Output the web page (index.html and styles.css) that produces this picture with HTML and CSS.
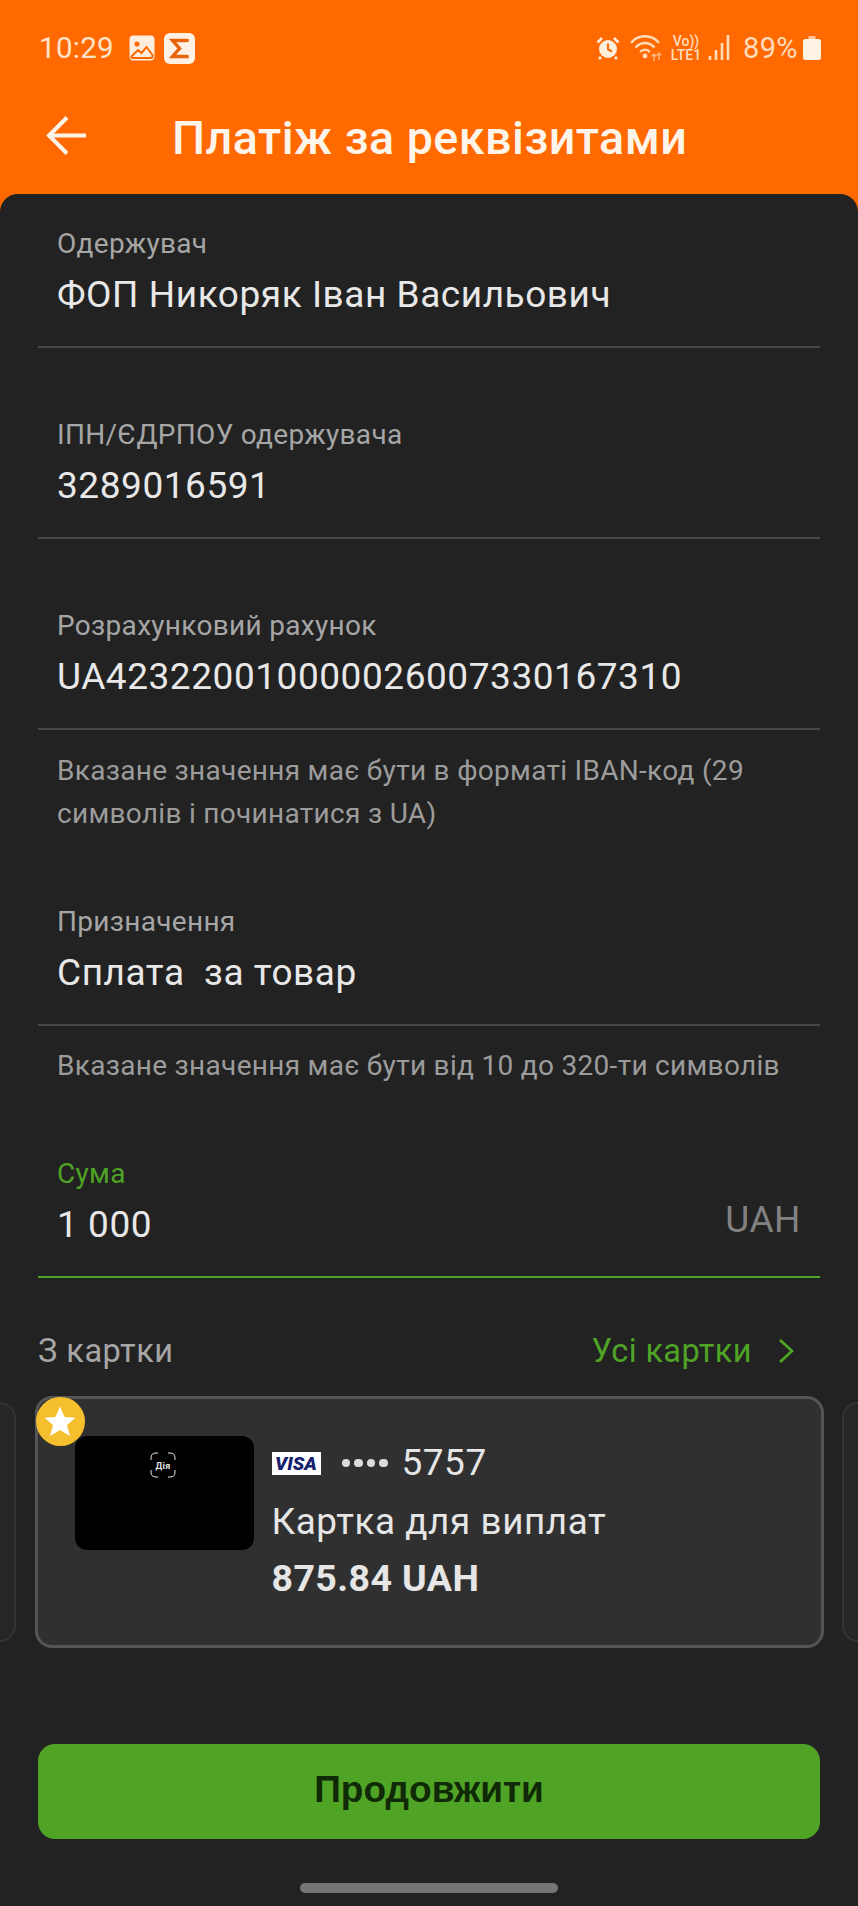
FILE: index.html
```html
<!DOCTYPE html>
<html lang="uk">
<head>
<meta charset="utf-8">
<title>Платіж за реквізитами</title>
<link rel="stylesheet" href="styles.css">
</head>
<body>
<div class="screen">
  <header class="top">
    <div class="status">
      <div class="status-left">
        <span class="time">10:29</span>
        <svg class="ic-gallery" width="26" height="26" viewBox="0 0 26 26"><rect x="0.5" y="0.5" width="25" height="25" rx="4" fill="#ffeede"/><circle cx="8" cy="9" r="2.6" fill="#ff6900"/><path d="M2.5 21.5 9 15l3.5 3 5-6 6 8v1.5q0 1.5-1.5 1.5H4q-1.5 0-1.5-1.5z" fill="none" stroke="#ff6900" stroke-width="2"/></svg>
        <svg class="ic-sigma" width="31" height="31" viewBox="0 0 31 31"><rect width="31" height="31" rx="6" fill="#fff1e4"/><path d="M23 9V7.500H8.500L15.500 15.500 8.500 23.500H23V22" fill="none" stroke="#e8640a" stroke-width="3.400"/></svg>
      </div>
      <div class="status-right">
        <svg width="24" height="24" viewBox="0 0 24 24"><circle cx="12" cy="13" r="9" fill="#ffeede"/><path d="M12 7.500V13.500L16 15.500" fill="none" stroke="#ff6900" stroke-width="2"/><path d="M1.500 6.500 6 2M22.500 6.500 18 2M5 21l-2 2M19 21l2 2" stroke="#ffeede" stroke-width="2.600" fill="none"/></svg>
        <svg class="ic-wifi" width="32" height="26" viewBox="0 0 32 26"><path d="M1 8C8-1 22-1 29 8M5.500 12.500C11 6.500 19 6.500 24.500 12.500M10 17C13 14 17 14 20 17" fill="none" stroke="#ffdcbc" stroke-width="2.400"/><circle cx="15" cy="21" r="2.400" fill="#ffdcbc"/><path d="M24 26v-7M21.500 21.500 24 19l2.500 2.500M29 25v-7M26.800 20.200 29 18l2.200 2.200" fill="none" stroke="#ffb27a" stroke-width="1.500"/></svg>
        <span class="net"><span class="net-a">Vo))</span><span class="net-b">LTE1</span></span>
        <svg class="ic-signal" width="22" height="25" viewBox="0 0 22 25"><path d="M2 25v-4M8 25V15M14 25V8M20 25V0" stroke="#ffdcbc" stroke-width="2.600" fill="none"/></svg>
        <span class="pct">89%</span>
        <svg class="ic-batt" width="18" height="24" viewBox="0 0 18 24"><path d="M5.500 0h7v3h-7z" fill="#ffc596"/><rect y="3" width="18" height="21" rx="2.500" fill="#fff1e4"/></svg>
      </div>
    </div>
    <div class="appbar">
      <svg class="back" width="40" height="40" viewBox="0 0 40 40"><path d="M40 19.500H3M21 1.500 3 19.500 21 37.500" fill="none" stroke="#fff4ea" stroke-width="4"/></svg>
      <h1 class="title">Платіж за реквізитами</h1>
    </div>
  </header>

  <main class="panel">
    <section class="field first">
      <div class="label">Одержувач</div>
      <div class="value">ФОП Никоряк Іван Васильович</div>
    </section>
    <section class="field">
      <div class="label">ІПН/ЄДРПОУ одержувача</div>
      <div class="value">3289016591</div>
    </section>
    <section class="field">
      <div class="label">Розрахунковий рахунок</div>
      <div class="value">UA423220010000026007330167310</div>
    </section>
    <p class="hint">Вказане значення має бути в форматі IBAN-код (29 символів і починатися з UA)</p>
    <section class="field">
      <div class="label">Призначення</div>
      <div class="value">Сплата&nbsp; за товар</div>
    </section>
    <p class="hint">Вказане значення має бути від 10 до 320-ти символів</p>
    <section class="field active">
      <div class="label">Сума</div>
      <div class="value-row">
        <div class="value">1 000</div>
        <div class="currency">UAH</div>
      </div>
    </section>

    <div class="cards-head">
      <span class="cards-title">З картки</span>
      <span class="cards-all">Усі картки
        <svg width="16" height="26" viewBox="0 0 16 26"><path d="M2 2 14 13 2 24" fill="none" stroke="#4fa325" stroke-width="2.800"/></svg>
      </span>
    </div>

    <div class="carousel">
      <div class="peek peek-left"></div>
      <article class="card">
        <span class="star">
          <svg width="32" height="31" viewBox="0 0 32 31"><path d="M16 .5 20.500 11 31.500 11.800 23 19 26 30 16 24 6 30 9 19 .5 11.800 11.500 11z" fill="#fff"/></svg>
        </span>
        <div class="card-img">
          <svg class="dia" width="26" height="26" viewBox="0 0 26 26"><path d="M1 8V6Q1 1 6 1H8M18 1H20Q25 1 25 6V8M25 18V20Q25 25 20 25H18M8 25H6Q1 25 1 20V18" fill="none" stroke="#e5e5e5" stroke-width="1"/><text class="dia-text" x="13" y="16.500" text-anchor="middle">Дія</text></svg>
        </div>
        <div class="card-info">
          <div class="card-num">
            <span class="visa">VISA</span>
            <span class="dots"><i></i><i></i><i></i><i></i></span>
            <span>5757</span>
          </div>
          <div class="card-name">Картка для виплат</div>
          <div class="card-sum">875.84 UAH</div>
        </div>
      </article>
      <div class="peek peek-right"></div>
    </div>

    <button class="cta" type="button">Продовжити</button>
    <div class="home"></div>
  </main>
</div>
</body>
</html>
```
FILE: styles.css
```css
* { box-sizing: border-box; }
html, body { margin: 0; padding: 0; }
body { width: 858px; height: 1906px; overflow: hidden; background: #ff6900; font-family: Roboto, "Noto Sans", sans-serif; }
.screen { width: 858px; height: 1906px; display: flex; flex-direction: column; }

.top { height: 194px; background: #ff6900; color: #fff; }
.status { height: 96px; padding: 30px 37px 0 39px; display: flex; justify-content: space-between; align-items: flex-start; }
.status-left { display: flex; align-items: center; gap: 14px; height: 36px; }
.time { font-size: 29.500px; line-height: 36px; color: #ffe3c9; letter-spacing: .3px; }
.ic-gallery { margin-left: 1px; }
.ic-sigma { margin-left: -5px; }
.status-right { display: flex; align-items: center; height: 36px; color: #ffdcbc; }
.ic-wifi { margin-left: 10px; }
.net { display: flex; flex-direction: column; margin-left: 9px; width: 30px; font-weight: 500; align-items: center; }
.net-a { font-size: 14px; line-height: 14px; }
.net-b { font-size: 14px; line-height: 14px; }
.ic-signal { margin-left: 7px; margin-top: -2px; }
.pct { font-size: 29px; line-height: 36px; margin-left: 13px; letter-spacing: .4px; }
.ic-batt { margin-left: 5px; }

.appbar { height: 66px; display: flex; align-items: center; padding: 14px 0 0 46px; }
.back { flex: none; }
.title { margin: 0 0 0 86px; font-size: 46.600px; line-height: 50px; font-weight: 500; color: #fff4ea; white-space: nowrap; letter-spacing: .5px; position: relative; top: 2px; }

.panel { flex: 1; background: #222222; border-radius: 18px 18px 0 0; padding-top: 35px; overflow: hidden; }
.field { margin: 72px 38px 0; padding: 0 19px 28px; border-bottom: 2px solid #474747; }
.field.first { margin-top: 0; }
.label { font-size: 28px; line-height: 30px; color: #a6a6a6; letter-spacing: .3px; white-space: nowrap; }
.value { margin-top: 13px; font-size: 37px; line-height: 46px; color: #e8e8e8; letter-spacing: .55px; white-space: nowrap; }
.value-row { display: flex; justify-content: space-between; align-items: center; }
.currency { font-size: 37px; line-height: 46px; margin-top: 2px; color: #818181; letter-spacing: .5px; }
.field.active { border-bottom-color: #4fa325; padding-right: 19px; }
.field.active .label { color: #4fa325; }
.hint { margin: 18.500px 38px 0; padding: 0 19px; font-size: 28px; line-height: 43px; color: #9c9c9c; letter-spacing: .3px; }

.cards-head { margin: 48px 38px 0; padding-right: 26px; display: flex; justify-content: space-between; align-items: center; height: 50px; }
.cards-title { font-size: 32.500px; line-height: 50px; color: #a6a6a6; letter-spacing: .5px; }
.cards-all { display: flex; align-items: center; gap: 26px; font-size: 32.500px; line-height: 50px; color: #4fa325; letter-spacing: .4px; }

.carousel { margin-top: 20px; height: 252px; display: flex; align-items: center; justify-content: space-between; position: relative; }
.peek { width: 16px; height: 240px; background: #262626; border: 2px solid #343434; }
.peek-left { border-left: 0; border-radius: 0 16px 16px 0; }
.peek-right { border-right: 0; border-radius: 16px 0 0 16px; }
.card { position: relative; width: 789px; height: 252px; background: #303030; border: 3px solid #555; border-radius: 17px; display: flex; padding: 37px 0 0 37px; }
.star { position: absolute; left: -2px; top: -2px; width: 49px; height: 49px; border-radius: 50%; background: #f6bf2d; display: flex; align-items: center; justify-content: center; }
.card-img { width: 179px; height: 114px; background: #000; border-radius: 12px; display: flex; justify-content: center; padding: 16px 2px 0 0; flex: none; }
.dia { display: block; }
.dia-text { font-size: 9px; font-weight: 700; fill: #e5e5e5; letter-spacing: .3px; }
.card-info { margin-left: 18px; color: #e6e6e6; padding-top: 5px; }
.card-num { display: flex; align-items: center; font-size: 37px; line-height: 44px; letter-spacing: .5px; margin-top: 0; }
.visa { width: 49px; height: 23px; background: #fff; color: #14206e; font-size: 19px; line-height: 23px; font-weight: 900; font-style: italic; text-align: center; letter-spacing: 0; }
.dots { margin-left: 21px; margin-right: 14px; display: flex; gap: 4px; }
.dots i { display: block; width: 8.500px; height: 8.500px; border-radius: 50%; background: #dcdcdc; }
.card-name { margin-top: 14px; font-size: 36.800px; line-height: 46px; letter-spacing: .6px; white-space: nowrap; }
.card-sum { margin-top: 10px; font-size: 37.500px; line-height: 46px; font-weight: 700; letter-spacing: .4px; }

.cta { display: block; margin: 96px auto 0; width: 782px; height: 95px; border: 0; border-radius: 17px; background: #4fa325; color: #102a08; font-family: "Liberation Sans", Arial, sans-serif; font-size: 37px; font-weight: 700; padding: 0 0 3px; }
.home { margin: 44px auto 0; width: 258px; height: 10px; border-radius: 5px; background: #757575; }
```
